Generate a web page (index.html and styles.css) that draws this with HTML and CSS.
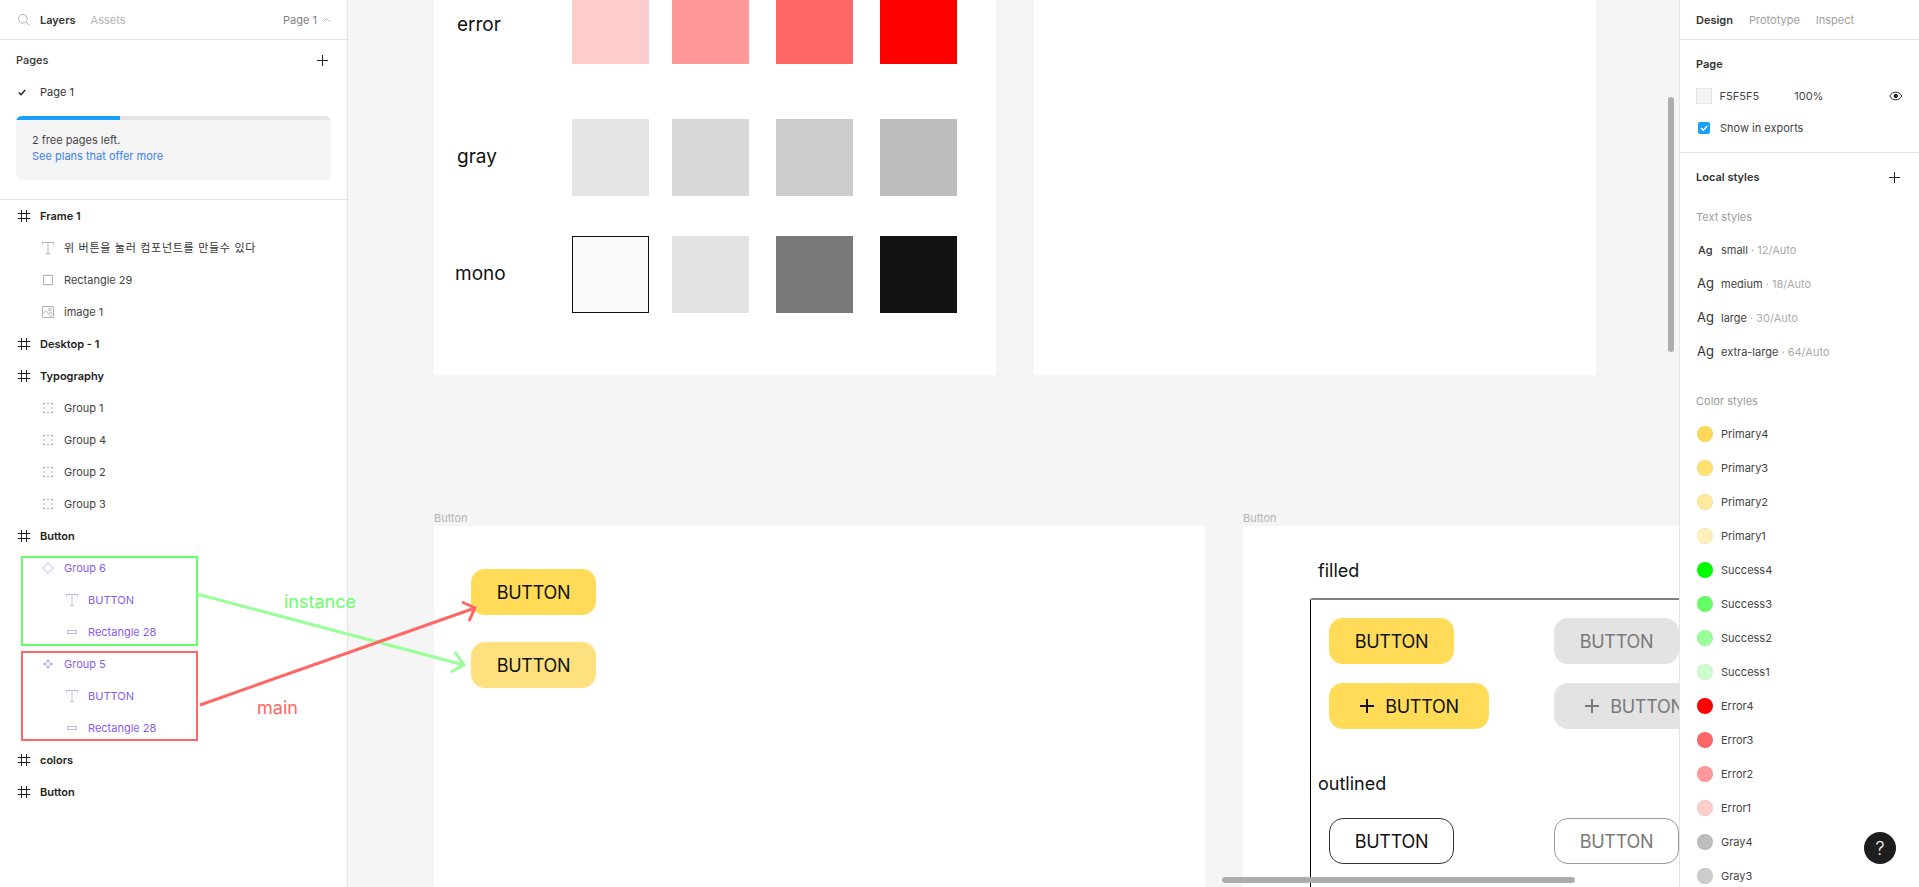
FILE: index.html
```html
<!DOCTYPE html>
<html lang="en">
<head>
<meta charset="utf-8">
<title>Figma</title>
<link rel="stylesheet" href="styles.css">
</head>
<body>
<svg class="sprite" aria-hidden="true">
  <symbol id="i-hash" viewBox="0 0 12 12"><path d="M3.500 0v12M8.500 0v12M0 3.500h12M0 8.500h12" fill="none" stroke="currentColor"/></symbol>
  <symbol id="i-text" viewBox="0 0 12 12"><path d="M.5 2.500V.5h11v2M6 .5v11M4 11.500h4" fill="none" stroke="currentColor"/></symbol>
  <symbol id="i-rect" viewBox="0 0 10 10"><rect x=".5" y=".5" width="9" height="9" fill="none" stroke="currentColor"/></symbol>
  <symbol id="i-image" viewBox="0 0 12 12"><path d="M.5.5h11v11H.5zM.5 8l3.500-3.500 6 7M7 7.500l1.500-1.500 3 3" fill="none" stroke="currentColor"/><circle cx="8" cy="3.600" r="1.300" fill="none" stroke="currentColor"/></symbol>
  <symbol id="i-group" viewBox="0 0 10 10"><path d="M0 .5h2M4 .5h2M8 .5h2M0 9.500h2M4 9.500h2M8 9.500h2M.5 1v1M.5 4v2M.5 8v1M9.500 1v1M9.500 4v2M9.500 8v1" fill="none" stroke="currentColor"/></symbol>
  <symbol id="i-instance" viewBox="0 0 12 12"><path d="M6 .7 11.300 6 6 11.300.7 6z" fill="none" stroke="currentColor"/></symbol>
  <symbol id="i-component" viewBox="0 0 10 10"><path d="M5 0l2 2-2 2-2-2zM5 6l2 2-2 2-2-2zM2 3l2 2-2 2-2-2zM8 3l2 2-2 2-2-2z" fill="currentColor"/></symbol>
  <symbol id="i-bar" viewBox="0 0 10 4"><rect x=".5" y=".5" width="9" height="3" fill="none" stroke="currentColor"/></symbol>
  <symbol id="i-plus" viewBox="0 0 11 11"><path d="M5.500 0v11M0 5.500h11" fill="none" stroke="currentColor"/></symbol>
  <symbol id="i-plus-big" viewBox="0 0 16 16"><path d="M8 1v14M1 8h14" fill="none" stroke="currentColor" stroke-width="2"/></symbol>
</svg>

<div class="app">
  <aside class="left">
    <header class="tabs">
      <svg class="search" viewBox="0 0 12 12"><circle cx="4.800" cy="4.800" r="4.300" fill="none" stroke="currentColor"/><path d="m8 8 3.700 3.700" stroke="currentColor" fill="none"/></svg>
      <span class="tab active">Layers</span>
      <span class="tab">Assets</span>
      <span class="page-picker">Page 1
        <svg class="chev" viewBox="0 0 7 4"><path d="M.5 3.500 3.500.5l3 3" fill="none" stroke="currentColor"/></svg>
      </span>
    </header>
    <section class="pages">
      <div class="pages-head"><span class="title">Pages</span><svg class="plus"><use href="#i-plus"/></svg></div>
      <div class="page-row">
        <svg class="check" viewBox="0 0 8 7"><path d="m.8 3.500 2.200 2.200L7.200 1" fill="none" stroke="currentColor" stroke-width="1.500"/></svg>
        <span>Page 1</span>
      </div>
      <div class="quota">
        <div class="quota-bar"><div class="quota-fill"></div></div>
        <div class="quota-body">
          <div>2 free pages left.</div>
          <div class="link">See plans that offer more</div>
        </div>
      </div>
    </section>
    <ul class="layers">
      <li class="layer top"><svg class="li"><use href="#i-hash"/></svg>Frame 1</li>
      <li class="layer l1"><svg class="li dim"><use href="#i-text"/></svg><span class="ko">위 버튼을 눌러 컴포넌트를 만들수 있다</span></li>
      <li class="layer l1"><svg class="li dim small"><use href="#i-rect"/></svg>Rectangle 29</li>
      <li class="layer l1"><svg class="li dim"><use href="#i-image"/></svg>image 1</li>
      <li class="layer top"><svg class="li"><use href="#i-hash"/></svg>Desktop - 1</li>
      <li class="layer top"><svg class="li"><use href="#i-hash"/></svg>Typography</li>
      <li class="layer l1"><svg class="li dim small"><use href="#i-group"/></svg>Group 1</li>
      <li class="layer l1"><svg class="li dim small"><use href="#i-group"/></svg>Group 4</li>
      <li class="layer l1"><svg class="li dim small"><use href="#i-group"/></svg>Group 2</li>
      <li class="layer l1"><svg class="li dim small"><use href="#i-group"/></svg>Group 3</li>
      <li class="layer top"><svg class="li"><use href="#i-hash"/></svg>Button</li>
      <li class="layer l1 comp"><svg class="li"><use href="#i-instance"/></svg>Group 6</li>
      <li class="layer l2 comp"><svg class="li"><use href="#i-text"/></svg>BUTTON</li>
      <li class="layer l2 comp"><svg class="li bar"><use href="#i-bar"/></svg>Rectangle 28</li>
      <li class="layer l1 comp"><svg class="li small"><use href="#i-component"/></svg>Group 5</li>
      <li class="layer l2 comp"><svg class="li"><use href="#i-text"/></svg>BUTTON</li>
      <li class="layer l2 comp"><svg class="li bar"><use href="#i-bar"/></svg>Rectangle 28</li>
      <li class="layer top"><svg class="li"><use href="#i-hash"/></svg>colors</li>
      <li class="layer top"><svg class="li"><use href="#i-hash"/></svg>Button</li>
    </ul>
  </aside>

  <main class="canvas">
    <div class="frame colors">
      <div class="swatch-row row-error">
        <span class="row-label">error</span>
        <i class="sw c-ffc"></i><i class="sw c-f99"></i><i class="sw c-f66"></i><i class="sw c-f00"></i>
      </div>
      <div class="swatch-row row-gray">
        <span class="row-label">gray</span>
        <i class="sw c-e5"></i><i class="sw c-d8"></i><i class="sw c-cc"></i><i class="sw c-bd"></i>
      </div>
      <div class="swatch-row row-mono">
        <span class="row-label mono">mono</span>
        <i class="sw c-fa"></i><i class="sw c-e3"></i><i class="sw c-79"></i><i class="sw c-12"></i>
      </div>
    </div>
    <div class="frame blank"></div>

    <span class="frame-label fl-a">Button</span>
    <div class="frame btn-a">
      <div class="stack">
        <div class="btn y1">BUTTON</div>
        <div class="btn y2">BUTTON</div>
      </div>
    </div>

    <span class="frame-label fl-b">Button</span>
    <div class="frame btn-b">
      <div class="heading h-filled">filled</div>
      <div class="outline">
        <div class="btn-grid">
          <div class="btn y1">BUTTON</div>
          <div class="btn g">BUTTON</div>
          <div class="btn y1 wide"><svg class="pi"><use href="#i-plus-big"/></svg>BUTTON</div>
          <div class="btn g wide"><svg class="pi"><use href="#i-plus-big"/></svg>BUTTON</div>
        </div>
        <div class="heading h-outlined">outlined</div>
        <div class="btn-grid">
          <div class="btn ol">BUTTON</div>
          <div class="btn ol muted">BUTTON</div>
        </div>
      </div>
    </div>

    <div class="sb sb-v"></div>
    <div class="sb sb-h"></div>
  </main>

  <aside class="right">
    <header class="tabs rt">
      <span class="tab active">Design</span>
      <span class="tab">Prototype</span>
      <span class="tab">Inspect</span>
    </header>
    <section class="page-sec">
      <div class="title page-title">Page</div>
      <div class="fill-row">
        <i class="fill-sw"></i>
        <span class="fill-hex">F5F5F5</span>
        <span class="fill-pct">100%</span>
        <svg class="eye" viewBox="0 0 14 10"><path d="M.8 5C2.300 2.300 4.500 1 7 1s4.700 1.300 6.200 4C11.700 7.700 9.500 9 7 9S2.300 7.700.8 5z" fill="none" stroke="currentColor"/><circle cx="7" cy="5" r="2.200" fill="currentColor"/></svg>
      </div>
      <div class="export-row">
        <span class="cb"><svg viewBox="0 0 12 12"><path d="m3 6 2.200 2.200L9.200 4" fill="none" stroke="#fff" stroke-width="1.500"/></svg></span>
        <span>Show in exports</span>
      </div>
    </section>
    <section class="styles-sec">
      <div class="styles-head"><span class="title">Local styles</span><svg class="plus"><use href="#i-plus"/></svg></div>
      <div class="sub-title">Text styles</div>
      <div class="ts"><span class="ag ag-s">Ag</span><span>small<em> · 12/Auto</em></span></div>
      <div class="ts"><span class="ag">Ag</span><span>medium<em> · 18/Auto</em></span></div>
      <div class="ts"><span class="ag">Ag</span><span>large<em> · 30/Auto</em></span></div>
      <div class="ts"><span class="ag">Ag</span><span>extra-large<em> · 64/Auto</em></span></div>
      <div class="sub-title color-title">Color styles</div>
      <div class="cs"><i class="dot d-p4"></i>Primary4</div>
      <div class="cs"><i class="dot d-p3"></i>Primary3</div>
      <div class="cs"><i class="dot d-p2"></i>Primary2</div>
      <div class="cs"><i class="dot d-p1"></i>Primary1</div>
      <div class="cs"><i class="dot d-s4"></i>Success4</div>
      <div class="cs"><i class="dot d-s3"></i>Success3</div>
      <div class="cs"><i class="dot d-s2"></i>Success2</div>
      <div class="cs"><i class="dot d-s1"></i>Success1</div>
      <div class="cs"><i class="dot d-e4"></i>Error4</div>
      <div class="cs"><i class="dot d-e3"></i>Error3</div>
      <div class="cs"><i class="dot d-e2"></i>Error2</div>
      <div class="cs"><i class="dot d-e1"></i>Error1</div>
      <div class="cs"><i class="dot d-g4"></i>Gray4</div>
      <div class="cs"><i class="dot d-g3"></i>Gray3</div>
    </section>
    <button class="help">?</button>
  </aside>
</div>

<div class="note-box nb-green"></div>
<div class="note-box nb-red"></div>
<svg class="arrows" viewBox="0 0 1919 887">
  <path class="a-green" d="M197 594 464 665M455 652l9 13-13 7"/>
  <path class="a-red" d="M200 705 475 608M462 602l13 6-6 13"/>
</svg>
<span class="note n-instance">instance</span>
<span class="note n-main">main</span>
</body>
</html>
```
FILE: styles.css
```css
* { box-sizing: border-box; }
html, body { margin: 0; height: 100%; overflow: hidden; }
body { font-family: Inter, "Noto Sans CJK KR", sans-serif; font-size: 11px; color: #333; background: #fff; }
.sprite { position: absolute; width: 0; height: 0; }
.app { display: flex; height: 887px; width: 1919px; }

/* Left panel */
.left { width: 348px; flex: none; background: #fff; border-right: 1px solid #e5e5e5; position: relative; z-index: 2; }
.tabs { height: 40px; display: flex; align-items: center; border-bottom: 1px solid #e5e5e5; padding-left: 18px; }
.search { width: 12px; height: 12px; color: #b3b3b3; margin-right: 10px; }
.tab { color: #b3b3b3; margin-right: 15px; font-size: 11px; }
.tab.active { color: #333; font-weight: 600; }
.page-picker { margin-left: auto; margin-right: 17px; display: flex; align-items: center; gap: 6px; color: #808080; }
.chev { width: 7px; height: 4px; color: #b3b3b3; }
.pages { height: 160px; border-bottom: 1px solid #e5e5e5; padding: 0 16px; }
.pages-head { height: 40px; display: flex; align-items: center; justify-content: space-between; padding-right: 3px; }
.title { font-weight: 600; color: #333; }
.pages-head .title { font-weight: 500; }
.plus { width: 11px; height: 11px; color: #222; }
.page-row { height: 24px; display: flex; align-items: center; gap: 14px; color: #333; }
.check { width: 8px; height: 7px; margin-left: 2px; color: #222; }
.quota { margin-top: 12px; border-radius: 6px; overflow: hidden; background: #f4f4f4; height: 64px; }
.quota-bar { height: 4px; background: #e5e5e5; }
.quota-fill { width: 104px; height: 4px; background: #18a0fb; }
.quota-body { padding: 12px 16px; line-height: 16px; color: #444; }
.link { color: #3b82f6; }
.layers { list-style: none; margin: 0; padding: 0; }
.layer { height: 32px; display: flex; align-items: center; gap: 8px; color: #444; white-space: nowrap; }
.layer.top { padding-left: 18px; font-weight: 600; color: #222; gap: 10px; }
.layer.l1 { padding-left: 40px; }
.layer.l2 { padding-left: 64px; }
.layer.comp { color: #8560e8; }
.li { width: 12px; height: 12px; margin: 0 2px; flex: none; color: #222; }
.layer.top .li { margin: 0; }
.li.dim { color: #b3b3b3; }
.li.small { width: 10px; height: 10px; margin: 0 3px; }
.comp .li { color: #c4b5ea; }
.li.bar { width: 10px; height: 4px; margin: 0 3px; }
.ko { color: #333; letter-spacing: .7px; margin-top: -2px; }

/* Canvas */
.canvas { flex: 1; background: #f5f5f5; position: relative; overflow: hidden; }
.frame { position: absolute; background: #fff; }
.frame.colors { left: 86px; top: -13px; width: 562px; height: 388px; display: flex; flex-direction: column; }
.frame.blank { left: 686px; top: -13px; width: 562px; height: 388px; }
.swatch-row { display: grid; grid-template-columns: 138px 100px 104px 104px 77px; align-items: center; height: 77px; }
.row-gray { margin-top: 55px; }
.row-mono { margin-top: 40px; }
.row-label { font-size: 19px; color: #111; margin: -2px 0 0 23px; }
.row-label.mono { margin-left: 21px; }
.sw { display: block; width: 77px; height: 77px; }
.c-ffc { background: #ffcccc; }
.c-f99 { background: #ff9999; }
.c-f66 { background: #ff6666; }
.c-f00 { background: #ff0000; }
.c-e5 { background: #e5e5e5; }
.c-d8 { background: #d8d8d8; }
.c-cc { background: #cccccc; }
.c-bd { background: #bdbdbd; }
.c-fa { background: #fafafa; border: 1px solid #111; }
.c-e3 { background: #e3e3e3; }
.c-79 { background: #797979; }
.c-12 { background: #121212; }

.frame-label { position: absolute; top: 511px; font-size: 11px; color: #b3b3b3; }
.fl-a { left: 86px; }
.fl-b { left: 895px; }
.frame.btn-a { left: 86px; top: 526px; width: 771px; height: 400px; padding: 43px 0 0 37px; }
.stack { display: flex; flex-direction: column; gap: 27px; }
.btn { width: 125px; height: 46px; border-radius: 14px; display: flex; align-items: center; justify-content: center; font-size: 18px; letter-spacing: -.25px; color: #111; flex: none; }
.y1 { background: #ffdb58; }
.y2 { background: #ffe07f; }
.g { background: #e3e3e3; color: #797979; }
.wide { width: 160px; gap: 10px; }
.pi { width: 16px; height: 16px; color: currentColor; }
.ol { border: 1px solid #333; background: #fff; }
.ol.muted { border-color: #999; color: #797979; }
.frame.btn-b { left: 895px; top: 526px; width: 800px; height: 400px; padding: 34px 0 0 0; }
.heading { font-size: 18px; line-height: 22px; color: #111; font-weight: 400; }
.h-filled { margin-left: 75px; height: 38px; }
.outline { margin-left: 67px; border: 1px solid #000; border-top: 2px solid #808080; border-right: 0; border-radius: 3px 0 0 0; padding: 18px 0 0 18px; height: 400px; }
.btn-grid { display: grid; grid-template-columns: 225px 125px; row-gap: 19px; }
.h-outlined { margin: 44px 0 0 -11px; height: 45px; }

.sb { position: absolute; background: #adadad; border-radius: 3px; }
.sb-v { left: 1320px; top: 97px; width: 6px; height: 255px; }
.sb-h { left: 874px; top: 877px; width: 353px; height: 6px; }

/* Right panel */
.right { width: 240px; flex: none; background: #fff; border-left: 1px solid #e5e5e5; position: relative; z-index: 2; overflow: hidden; }
.tabs.rt { padding-left: 16px; }
.rt .tab { margin-right: 16px; color: #a0a0a0; }
.rt .tab.active { color: #333; }
.page-sec { height: 113px; border-bottom: 1px solid #e5e5e5; padding: 0 16px; }
.page-title { height: 48px; line-height: 48px; }
.fill-row { display: flex; align-items: center; height: 16px; }
.fill-sw { width: 16px; height: 16px; background: #f5f5f5; border: 1px solid #e5e5e5; }
.fill-hex { margin-left: 8px; width: 77px; color: #444; }
.fill-pct { color: #444; }
.eye { width: 14px; height: 10px; color: #222; margin-left: 66px; }
.export-row { display: flex; align-items: center; gap: 10px; margin-top: 16px; height: 16px; color: #444; }
.cb { width: 12px; height: 12px; margin-left: 2px; background: #18a0fb; border-radius: 2px; display: block; }
.cb svg { display: block; width: 12px; height: 12px; }
.styles-head { height: 48px; display: flex; align-items: center; justify-content: space-between; padding: 0 19px 0 16px; }
.sub-title { color: #9a9a9a; padding-left: 16px; height: 32px; line-height: 32px; }
.ts { height: 34px; display: flex; align-items: center; padding-left: 17px; color: #444; }
.ts em { font-style: normal; color: #aaa; }
.ag { width: 24px; font-size: 13px; color: #333; line-height: 1; margin-top: -2px; }
.ag-s { font-size: 11px; padding-left: 1px; font-weight: 500; margin-top: 0; }
.color-title { margin-top: 16px; height: 32px; }
.cs { height: 34px; display: flex; align-items: center; gap: 8px; padding-left: 17px; color: #444; }
.dot { width: 16px; height: 16px; border-radius: 50%; display: block; flex: none; border: 1px solid rgba(0,0,0,.04); }
.d-p4 { background: #ffd957; }
.d-p3 { background: #ffe070; }
.d-p2 { background: #ffe99e; }
.d-p1 { background: #fff0bd; }
.d-s4 { background: #00ff00; }
.d-s3 { background: #66ff66; }
.d-s2 { background: #99ff99; }
.d-s1 { background: #ccffcc; }
.d-e4 { background: #ff0000; }
.d-e3 { background: #ff6666; }
.d-e2 { background: #ff9999; }
.d-e1 { background: #ffcccc; }
.d-g4 { background: #bdbdbd; }
.d-g3 { background: #cccccc; }
.help { position: absolute; left: 184px; top: 832px; width: 32px; height: 32px; border-radius: 50%; border: 0; background: #1e1e1e; color: #fff; font: 300 18px Inter, sans-serif; padding: 0; }

/* Annotations lying over everything */
.note-box { position: absolute; left: 21px; width: 177px; border: 2px solid; z-index: 3; }
.nb-green { top: 556px; height: 90px; border-color: #66ff66; }
.nb-red { top: 651px; height: 90px; border-color: #ff6666; }
.arrows { position: absolute; left: 0; top: 0; width: 1919px; height: 887px; z-index: 3; pointer-events: none; }
.arrows path { fill: none; stroke-width: 3; }
.a-green { stroke: #99ff99; }
.a-red { stroke: #ff6666; }
.note { position: absolute; font-size: 18px; line-height: 22px; z-index: 3; }
.n-instance { left: 284px; top: 591px; color: #66ff66; }
.n-main { left: 257px; top: 697px; color: #ff6666; }
```
